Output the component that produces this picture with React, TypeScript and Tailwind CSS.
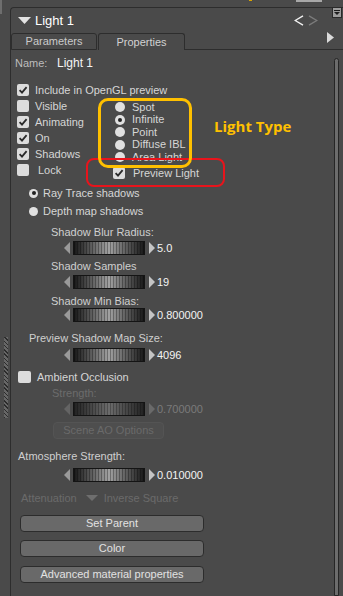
import React from 'react';

const BAR = 'bg-[repeating-linear-gradient(90deg,rgba(0,0,0,0.3)_0_1px,transparent_1px_3px),linear-gradient(90deg,#181818,#a2a2a2_50%,#181818)]';
const BAR_DIM = 'bg-[repeating-linear-gradient(90deg,rgba(0,0,0,0.25)_0_1px,transparent_1px_3px),linear-gradient(90deg,#222,#6c6c6c_50%,#222)]';

const Check: React.FC<{ checked?: boolean }> = ({ checked }) => (
    <span className="w-[12px] h-[12px] rounded-[2px] bg-[#dcdcdc] flex items-center justify-center shrink-0">
        {checked && (
            <svg width="10" height="10" viewBox="0 0 10 10">
                <path d="M1.6 5.1 L4 7.6 L8.6 2.2" fill="none" stroke="#2a2a2a" strokeWidth="1.8" />
            </svg>
        )}
    </span>
);

const Radio: React.FC<{ on?: boolean; small?: boolean }> = ({ on, small }) => (
    <span className={`rounded-full bg-[#e0e0e0] flex items-center justify-center shrink-0 ${small ? 'w-[9px] h-[9px]' : 'w-[10px] h-[10px]'}`}>
        {on && <span className="w-[4px] h-[4px] rounded-full bg-[#222]" />}
    </span>
);

const Slider: React.FC<{ value: string; disabled?: boolean; className?: string }> = ({ value, disabled, className }) => (
    <div className={`flex items-center h-[14px] pl-[53px] ${className ?? ''}`}>
        <svg width="6" height="12" viewBox="0 0 6 12">
            <polygon points="6,0 6,12 0,6" fill={disabled ? '#646464' : '#9a9a9a'} />
        </svg>
        <div className={`ml-[3px] w-[72px] h-[14px] border border-[#141414] ${disabled ? BAR_DIM : BAR}`} />
        <svg className="ml-[4px]" width="6" height="12" viewBox="0 0 6 12">
            <polygon points="0,0 0,12 6,6" fill={disabled ? '#6a6a6a' : '#c4c4c4'} />
        </svg>
        <span className={`ml-[2px] text-[11px] ${disabled ? 'text-[#7a7a7a]' : 'text-[#f4f4f4]'}`}>{value}</span>
    </div>
);

const Btn: React.FC<{ label: string; className?: string }> = ({ label, className }) => (
    <div className={`ml-[9px] w-[184px] h-[17px] rounded-[4px] border border-[#2c2c2c] bg-[#696969] flex items-center justify-center text-[11px] text-[#e2e2e2] ${className ?? ''}`}>
        {label}
    </div>
);

const App: React.FC = () => {
    return (
        <div className="relative w-[343px] h-[596px] overflow-hidden bg-[#4a4a4a] flex font-['Liberation_Sans',Arial,sans-serif] text-[11px] text-[#d6d6d6] leading-none select-none">
            {/* left dock strip */}
            <div className="w-[10px] flex flex-col shrink-0">
                <div className="w-[2px] h-[14px] bg-[#6e6e6e]" />
                <div className="ml-[4px] mt-[323px] w-[4px] h-[81px] bg-[repeating-linear-gradient(45deg,#2c2c2c_0_1px,#676767_1px_3px)]" />
            </div>

            <div className="flex-1 flex flex-col">
                {/* bits of the pane above */}
                <div className="h-[7px] flex items-start">
                    <div className="ml-[239px] w-[3px] h-[1px] bg-[#d9a400]" />
                    <div className="ml-[44px] w-[26px] h-[2px] bg-[#a8a8a8]" />
                </div>

                <div className="flex-1 flex flex-col border-t border-l border-[#2d2d2d] rounded-tl-[4px]">
                    {/* header */}
                    <div className="h-[25px] flex items-center pl-[7px]">
                        <svg width="13" height="7" viewBox="0 0 13 7">
                            <polygon points="0,0 13,0 6.5,7" fill="#e4e4e4" />
                        </svg>
                        <span className="ml-[4px] text-[13px] text-white">Light 1</span>
                        <div className="flex-1" />
                        <svg width="10" height="11" viewBox="0 0 10 11">
                            <polyline points="9,0.8 1.2,5.5 9,10.2" fill="none" stroke="#f2f2f2" strokeWidth="1.4" />
                        </svg>
                        <svg className="ml-[4px]" width="10" height="11" viewBox="0 0 10 11">
                            <polyline points="1,0.8 8.8,5.5 1,10.2" fill="none" stroke="#7c7c7c" strokeWidth="1.4" />
                        </svg>
                        <div className="ml-[14px] mr-[1px] self-start -mt-px w-[10px] h-[11px] border border-[#2a2a2a] bg-[#9c9c9c] flex flex-col items-center justify-center">
                            <div className="w-[6px] h-px bg-[#1c1c1c]" />
                            <svg className="mt-px" width="6" height="3" viewBox="0 0 6 3">
                                <polygon points="0,0 6,0 3,3" fill="#1c1c1c" />
                            </svg>
                        </div>
                    </div>

                    {/* tabs */}
                    <div className="flex h-[17px]">
                        <div className="w-[86px] border border-[#2d2d2d] rounded-t-[3px] flex items-center justify-center text-[#cacaca]">
                            Parameters
                        </div>
                        <div className="ml-[1px] w-[87px] border-t border-l border-r border-[#2d2d2d] rounded-t-[3px] flex items-center justify-center text-[#d2d2d2]">
                            Properties
                        </div>
                        <div className="flex-1 border-b border-[#2d2d2d] flex justify-end items-start pr-[9px]">
                            <svg className="-mt-px" width="7" height="11" viewBox="0 0 7 11">
                                <polygon points="0,0 7,5.5 0,11" fill="#dadada" />
                            </svg>
                        </div>
                    </div>

                    {/* body */}
                    <div className="flex-1 flex">
                        <div className="flex-1 flex flex-col">
                            {/* name */}
                            <div className="mt-[6px] h-[14px] flex items-center pl-[4px]">
                                <span className="w-[42px] text-[#bdbdbd]">Name:</span>
                                <span className="text-[12px] text-[#f4f4f4]">Light 1</span>
                            </div>

                            <div className="mt-[12px] h-[16px] flex items-center pl-[6px]">
                                <Check checked />
                                <span className="ml-[6px] whitespace-nowrap">Include in OpenGL preview</span>
                            </div>

                            <div className="flex">
                                <div className="w-[102px] pl-[6px] flex flex-col">
                                    <div className="h-[16px] flex items-center"><Check /><span className="ml-[6px]">Visible</span></div>
                                    <div className="h-[16px] flex items-center"><Check checked /><span className="ml-[6px]">Animating</span></div>
                                    <div className="h-[16px] flex items-center"><Check checked /><span className="ml-[6px]">On</span></div>
                                    <div className="h-[16px] flex items-center"><Check checked /><span className="ml-[6px]">Shadows</span></div>
                                    <div className="h-[16px] flex items-center"><Check /><span className="ml-[9px]">Lock</span></div>
                                </div>
                                <div className="pt-[3px] flex flex-col">
                                    {['Spot', 'Infinite', 'Point', 'Diffuse IBL', 'Area Light'].map((t) => (
                                        <div key={t} className="h-[12.5px] flex items-center pl-[2px]">
                                            <Radio on={t === 'Infinite'} />
                                            <span className="ml-[7px]">{t}</span>
                                        </div>
                                    ))}
                                    <div className="mt-[1.5px] h-[16px] flex items-center">
                                        <Check checked />
                                        <span className="ml-[8px]">Preview Light</span>
                                    </div>
                                </div>
                            </div>

                            <div className="mt-[5px] h-[14px] flex items-center pl-[18px]">
                                <Radio on small />
                                <span className="ml-[5px]">Ray Trace shadows</span>
                            </div>
                            <div className="mt-[4px] h-[14px] flex items-center pl-[18px]">
                                <Radio small />
                                <span className="ml-[5px]">Depth map shadows</span>
                            </div>

                            <div className="mt-[7px] h-[14px] flex items-center pl-[40px] text-[#cfcfcf]">Shadow Blur Radius:</div>
                            <Slider className="mt-[2px]" value="5.0" />
                            <div className="mt-[4px] h-[14px] flex items-center pl-[40px] text-[#cfcfcf]">Shadow Samples</div>
                            <Slider className="mt-[2px]" value="19" />
                            <div className="mt-[5px] h-[14px] flex items-center pl-[40px] text-[#cfcfcf]">Shadow Min Bias:</div>
                            <Slider value="0.800000" />
                            <div className="mt-[9px] h-[14px] flex items-center pl-[18px] text-[#cfcfcf]">Preview Shadow Map Size:</div>
                            <Slider className="mt-[3px]" value="4096" />

                            <div className="mt-[8px] h-[14px] flex items-center pl-[7px]">
                                <span className="w-[13px] h-[12px] rounded-[2px] bg-[#dcdcdc]" />
                                <span className="ml-[6px]">Ambient Occlusion</span>
                            </div>
                            <div className="mt-[2px] h-[14px] flex items-center pl-[41px] text-[#6c6c6c]">Strength:</div>
                            <Slider className="mt-[2px]" value="0.700000" disabled />
                            <div className="mt-[6px] ml-[42px] w-[111px] h-[17px] rounded-[4px] border border-[#545454] bg-[#4e4e4e] flex items-center justify-center text-[#6a6a6a]">
                                Scene AO Options
                            </div>

                            <div className="mt-[10px] h-[14px] flex items-center pl-[7px] text-[#cfcfcf]">Atmosphere Strength:</div>
                            <Slider className="mt-[5px]" value="0.010000" />

                            <div className="mt-[9px] h-[14px] flex items-center pl-[10px] text-[#6a6a6a]">
                                <span>Attenuation</span>
                                <svg className="ml-[9px]" width="12" height="6" viewBox="0 0 12 6">
                                    <polygon points="0,0 12,0 6,6" fill="#6e6e6e" />
                                </svg>
                                <span className="ml-[6px]">Inverse Square</span>
                            </div>

                            <Btn className="mt-[10px]" label="Set Parent" />
                            <Btn className="mt-[8px]" label="Color" />
                            <Btn className="mt-[9px]" label="Advanced material properties" />
                        </div>
                        <div className="w-[5px] mt-[8px] mr-[4px] rounded-t-full border border-[#262626] bg-[#6c6c6c]" />
                    </div>
                </div>
            </div>

            {/* annotations drawn over the screenshot */}
            <div className="absolute left-[86px] top-[158px] w-[139px] h-[29px] border-2 border-[#e8141c] rounded-[8px]" />
            <div className="absolute left-[98px] top-[98px] w-[94px] h-[70px] border-[3px] border-[#ffc000] rounded-[10px]" />
            <div className="absolute left-[214px] top-[119px] font-['Open_Sans',sans-serif] font-bold text-[15px] leading-none text-[#ffc000]">
                Light Type
            </div>
        </div>
    );
};

export default App;
